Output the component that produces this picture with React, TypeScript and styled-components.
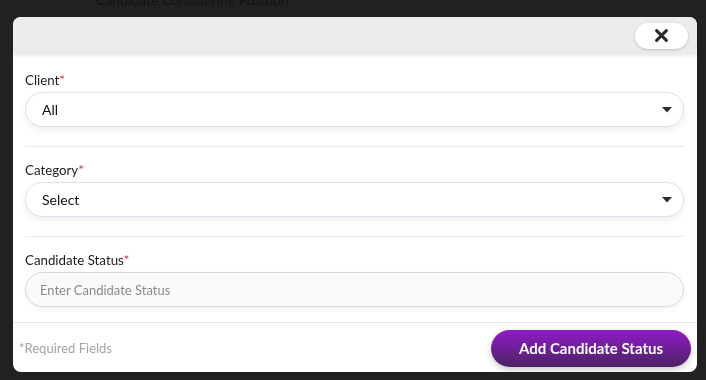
import React from 'react';
import styled, { createGlobalStyle } from 'styled-components';

const GlobalStyle = createGlobalStyle`
  html, body {
    margin: 0;
    padding: 0;
    background: #212121;
    font-family: Lato, "Open Sans", sans-serif;
  }
  * {
    box-sizing: border-box;
  }
`;

const Page = styled.div`
  height: 380px;
  overflow: hidden;
  padding-left: 96px;
`;

const PageTitle = styled.div`
  margin-top: -9px;
  font-size: 14px;
  color: #121212;
`;

const Modal = styled.div`
  position: fixed;
  left: 13px;
  top: 17px;
  width: 684px;
  height: 355px;
  background: #fff;
  border-radius: 8px;
  overflow: hidden;
  display: flex;
  flex-direction: column;
`;

const Header = styled.div`
  height: 36px;
  background: #ececec;
  display: flex;
  align-items: center;
  justify-content: flex-end;
  padding-right: 9px;
  box-shadow: 0 2px 5px rgba(0, 0, 0, 0.12);
  position: relative;
  z-index: 1;
`;

const CloseButton = styled.button`
  width: 53px;
  height: 26px;
  border: none;
  border-radius: 13px;
  background: #fff;
  box-shadow: 0 1px 3px rgba(0, 0, 0, 0.2);
  display: flex;
  align-items: center;
  justify-content: center;
  padding: 0;
  margin-top: 1px;
`;

const Body = styled.div`
  flex: 1;
  padding: 4px 13px 0 12px;
`;

const Field = styled.div<{ $last?: boolean }>`
  padding: 14px 0 ${p => (p.$last ? '15px' : '19px')};
  border-bottom: ${p => (p.$last ? 'none' : '1px solid #ebebeb')};
`;

const Label = styled.div`
  font-size: 13.3px;
  line-height: 18px;
  color: #1c1c1c;
  margin-bottom: 3px;
`;

const Star = styled.span`
  color: #e8263b;
`;

const SelectBox = styled.div`
  height: 35px;
  border: 1px solid #d7e2ef;
  border-radius: 18px;
  background: #fff;
  box-shadow: 0 3px 7px rgba(0, 0, 0, 0.07);
  display: flex;
  align-items: center;
  justify-content: space-between;
  padding: 0 11px 0 16px;
  font-size: 14px;
  color: #111;
`;

const TextInput = styled.input`
  width: 100%;
  height: 35px;
  border: 1px solid #d8d8d8;
  border-radius: 18px;
  background: #f9fafc;
  box-shadow: 0 2px 5px rgba(0, 0, 0, 0.05);
  padding: 0 14px;
  font-family: Lato, "Open Sans", sans-serif;
  font-size: 13px;
  color: #222;
  outline: none;
  &::placeholder {
    color: #8a8a8a;
  }
`;

const Footer = styled.div`
  height: 50px;
  border-top: 1px solid #e8e8e8;
  display: flex;
  align-items: center;
  justify-content: space-between;
  padding: 0 6px;
`;

const RequiredNote = styled.span`
  font-size: 13px;
  color: #a3a3a3;
`;

const SubmitButton = styled.button`
  width: 200px;
  height: 37px;
  border: none;
  border-radius: 19px;
  background: linear-gradient(180deg, #8f1cc6 0%, #6a1f93 55%, #4c2160 100%);
  box-shadow: 0 3px 6px rgba(0, 0, 0, 0.2);
  color: #fff;
  font-family: Lato, "Open Sans", sans-serif;
  font-weight: 700;
  font-size: 15px;
  margin-top: 1px;
`;

const Caret = () => (
  <svg width="10" height="6" viewBox="0 0 10 6">
    <path d="M0 0 L10 0 L5 5.5 Z" fill="#2b2b2b" />
  </svg>
);

const CloseIcon = () => (
  <svg width="13" height="13" viewBox="0 0 12 12">
    <path d="M1.5 1.5 L10.5 10.5 M10.5 1.5 L1.5 10.5" stroke="#2a2a2a" strokeWidth="2.8" strokeLinecap="round" />
  </svg>
);

const App = () => (
  <>
    <GlobalStyle />
    <Page>
      <PageTitle>Candidate Considering Position</PageTitle>
    </Page>
    <Modal>
      <Header>
        <CloseButton aria-label="Close">
          <CloseIcon />
        </CloseButton>
      </Header>
      <Body>
        <Field>
          <Label>Client<Star>*</Star></Label>
          <SelectBox>
            <span>All</span>
            <Caret />
          </SelectBox>
        </Field>
        <Field>
          <Label>Category<Star>*</Star></Label>
          <SelectBox>
            <span>Select</span>
            <Caret />
          </SelectBox>
        </Field>
        <Field $last>
          <Label>Candidate Status<Star>*</Star></Label>
          <TextInput placeholder="Enter Candidate Status" />
        </Field>
      </Body>
      <Footer>
        <RequiredNote>*Required Fields</RequiredNote>
        <SubmitButton>Add Candidate Status</SubmitButton>
      </Footer>
    </Modal>
  </>
);

export default App;
